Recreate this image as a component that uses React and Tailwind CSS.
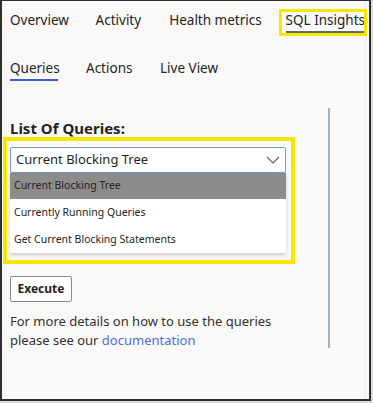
import React from "react";

export default function App() {
  return (
    <div className="w-[373px] h-[403px] bg-[#dadada] font-['Noto_Sans',sans-serif] text-[#252423]">
      <div className="relative w-[371px] h-[401px] bg-[#faf9f8] border-l-2 border-r-2 border-b-2 border-t border-[#2f2f2f]">
        <div className="w-[364px] h-full border-r border-[#ededed] pl-[8px]">
          {/* Top tabs */}
          <div className="flex items-center h-[32px] pt-[6px] text-[13.5px] whitespace-nowrap">
            <div className="w-[86px]">Overview</div>
            <div className="w-[74px]">Activity</div>
            <div className="w-[117px]">Health metrics</div>
            <div className="relative">
              <span>SQL Insights</span>
              <div className="absolute left-0 right-[0px] top-[21px] h-[2px] bg-[#5d6b75]" />
            </div>
          </div>
          {/* Sub tabs */}
          <div className="flex items-center h-[40px] mt-[15px] text-[13.5px]">
            <div className="relative w-[76px] self-stretch flex items-center">
              <span>Queries</span>
              <div className="absolute left-0 w-[48px] bottom-[7px] h-[2px] bg-[#3b5bd9]" />
            </div>
            <div className="w-[74px]">Actions</div>
            <div>Live View</div>
          </div>
          {/* Body */}
          <div className="flex mt-[20px]">
            <div className="w-[320px] h-[240px] border-r-2 border-[#9fb4cb]">
              <div className="pt-[10px] text-[15px] font-bold leading-[20px]">List Of Queries:</div>
              <div className="mt-[9px] w-[276px]">
                <div className="h-[26px] bg-white border border-[#7f93d3] rounded-[2px] flex items-center justify-between pl-[5px] pr-[5px] text-[13px]">
                  <span>Current Blocking Tree</span>
                  <svg width="14" height="8" viewBox="0 0 14 8" fill="none">
                    <path d="M1 1l6 6 6-6" stroke="#616161" strokeWidth="1.2" />
                  </svg>
                </div>
                <div className="bg-white shadow-[0_2px_4px_rgba(0,0,0,0.18)] text-[10.5px]">
                  <div className="h-[26px] flex items-center pl-[4px] bg-[#8c8c8c]">Current Blocking Tree</div>
                  <div className="h-[27px] flex items-center pl-[4px]">Currently Running Queries</div>
                  <div className="h-[27px] flex items-center pl-[4px]">Get Current Blocking Statements</div>
                </div>
              </div>
              <div className="mt-[22px]">
                <button className="h-[26px] w-[62px] bg-white border border-[#8a8886] rounded-[2px] text-[12px] font-bold">Execute</button>
              </div>
              <p className="mt-[10px] text-[13px] leading-[19px] text-[#323130]">
                For more details on how to use the queries<br />please see our{" "}
                <span className="text-[#4f6bde]">documentation</span>
              </p>
            </div>
          </div>
        </div>
        {/* Yellow annotation boxes */}
        <div className="absolute left-[277px] top-[8px] w-[88px] h-[27px] border-[3px] border-[#f7e600] pointer-events-none" />
        <div className="absolute left-[1px] top-[136px] w-[292px] h-[127px] border-[4px] border-[#f7e600] pointer-events-none" />
      </div>
    </div>
  );
}
